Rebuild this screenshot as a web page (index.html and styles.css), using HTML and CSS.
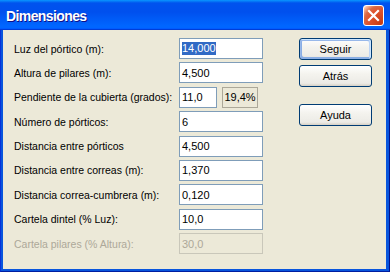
FILE: index.html
```html
<!DOCTYPE html>
<html lang="es">
<head>
<meta charset="utf-8">
<title>Dimensiones</title>
<link rel="stylesheet" href="styles.css">
</head>
<body>
<div class="window">
  <div class="titlebar">
    <span class="title">Dimensiones</span>
    <div class="close">
      <svg width="19" height="19" viewBox="0 0 19 19"><path d="M5 5 L14 14 M14 5 L5 14" stroke="#fff" stroke-width="2.2" stroke-linecap="square" fill="none"/></svg>
    </div>
  </div>
  <div class="frame">
    <div class="client">
      <div class="form">
        <div class="lbl">Luz del pórtico (m):</div>
        <div class="field"><span class="sel">14,000</span></div>

        <div class="lbl">Altura de pilares (m):</div>
        <div class="field">4,500</div>

        <div class="lbl">Pendiente de la cubierta (grados):</div>
        <div class="split">
          <div class="field small">11,0</div>
          <div class="field ro">19,4%</div>
        </div>

        <div class="lbl">Número de pórticos:</div>
        <div class="field">6</div>

        <div class="lbl">Distancia entre pórticos</div>
        <div class="field">4,500</div>

        <div class="lbl">Distancia entre correas (m):</div>
        <div class="field">1,370</div>

        <div class="lbl">Distancia correa-cumbrera (m):</div>
        <div class="field">0,120</div>

        <div class="lbl">Cartela dintel (% Luz):</div>
        <div class="field">10,0</div>

        <div class="lbl disabled">Cartela pilares (% Altura):</div>
        <div class="field off">30,0</div>
      </div>
      <div class="buttons">
        <div class="btn default">Seguir</div>
        <div class="btn">Atrás</div>
        <div class="btn help">Ayuda</div>
      </div>
    </div>
  </div>
</div>
</body>
</html>
```

FILE: styles.css
```css
* { box-sizing: border-box; }
html, body { margin: 0; padding: 0; }
body {
  width: 390px;
  height: 272px;
  overflow: hidden;
  font-family: "Liberation Sans", Arial, sans-serif;
  font-size: 10.5px;
  color: #000;
  background: #0855dd;
}
.window {
  width: 390px;
  height: 272px;
  display: flex;
  flex-direction: column;
}
.titlebar {
  height: 30px;
  flex: none;
  display: flex;
  align-items: center;
  justify-content: space-between;
  padding: 0 6px 0 6px;
  background: linear-gradient(180deg, #0997ff 0%, #0053ee 10%, #0050ee 40%, #0066ff 86%, #0066ff 92%, #005bff 95%, #003dd7 97%, #003dd7 100%);
}
.title {
  color: #fff;
  font-weight: bold;
  font-size: 14px;
  letter-spacing: -0.6px;
  text-shadow: 1px 1px #0f1089;
  margin-top: 1px;
}
.close {
  width: 21px;
  height: 21px;
  border: 1px solid #fff;
  border-radius: 3px;
  background: radial-gradient(circle at 90% 90%, #c83c12 0%, #e0542f 55%, #d96a45 72%, #ffc2a8 92%, #fff 100%);
  display: flex;
  align-items: center;
  justify-content: center;
}
.close svg { display: block; }
.frame {
  flex: 1;
  display: flex;
  background: #0855dd;
  border-left: 1px solid #0831d9;
  border-right: 1px solid #00138c;
  border-bottom: 1px solid #001ea0;
  padding: 0 3px 2px 2px;
}
.client {
  flex: 1;
  display: flex;
  align-items: flex-start;
  background: #ece9d8;
  padding: 8px 0 0 11px;
}
.form {
  display: grid;
  grid-template-columns: 165px 84px;
  grid-auto-rows: 21px;
  row-gap: 3.375px;
  align-items: center;
}
.lbl { white-space: nowrap; }
.lbl.disabled { color: #aca899; }
.field {
  height: 21px;
  border: 1px solid #7f9db9;
  background: #fff;
  padding-left: 2px;
  display: flex;
  align-items: center;
  font-size: 11px;
  white-space: nowrap;
}
.sel {
  background: #316ac5;
  color: #fff;
  line-height: 13px;
}
.split {
  display: flex;
  gap: 5px;
}
.field.small { width: 38px; }
.field.ro {
  width: 36px;
  background: #ece9d8;
  border-color: #aca899;
  justify-content: center;
  padding-left: 0;
}
.field.off {
  background: #ece9d8;
  border-color: #c9c7ba;
  color: #aca899;
}
.buttons {
  display: flex;
  flex-direction: column;
  gap: 5px;
  margin-left: 36px;
}
.btn {
  width: 73px;
  height: 22px;
  border: 1px solid #003c74;
  border-radius: 3px;
  background: linear-gradient(180deg, #ffffff 0%, #f4f3ee 40%, #ecebe6 86%, #d6d0c5 100%);
  display: flex;
  align-items: center;
  justify-content: center;
  font-size: 11px;
}
.btn.default {
  box-shadow: inset -1px 1px #cee7ff, inset 1px 2px #98b8ea, inset -2px 2px #bcd4f6, inset 1px -1px #89ade4, inset 2px -2px #89ade4;
}
.btn.help { margin-top: 12px; }
```
